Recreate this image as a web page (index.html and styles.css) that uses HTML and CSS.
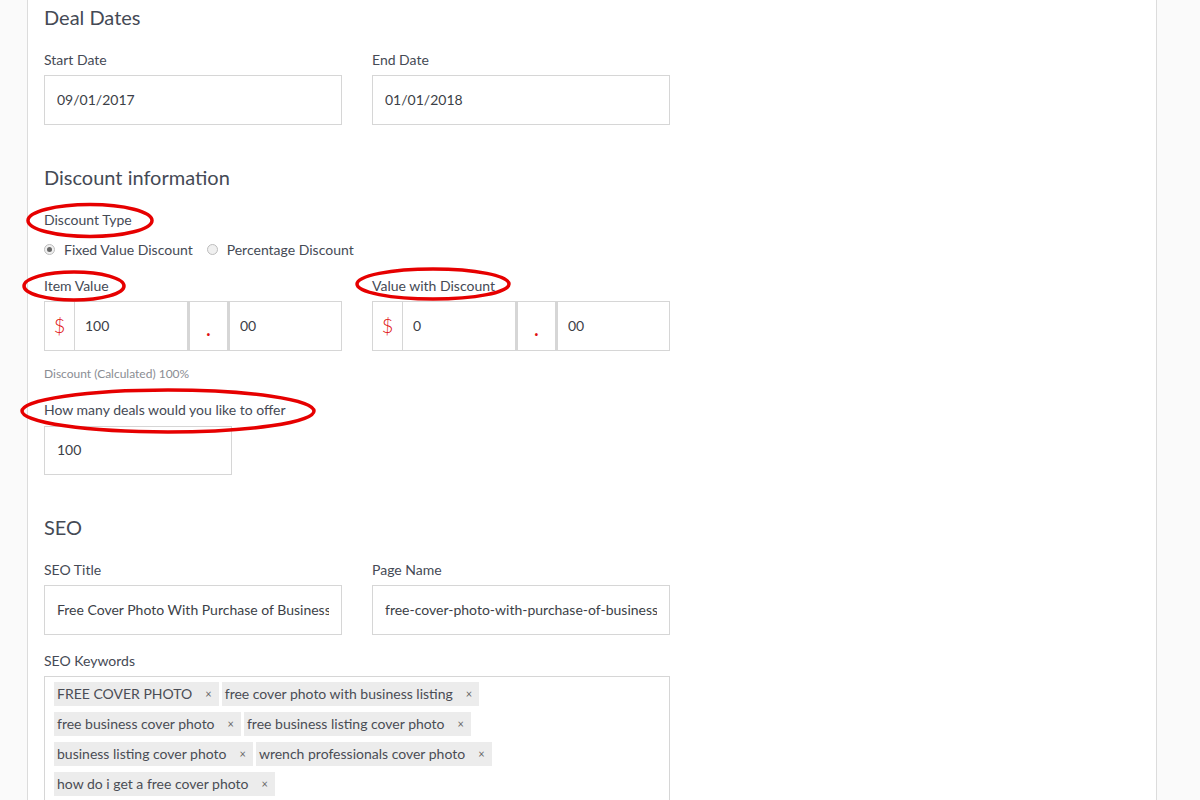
FILE: index.html
```html
<!DOCTYPE html>
<html>
<head>
<meta charset="utf-8">
<link rel="stylesheet" href="styles.css">
</head>
<body>
<div class="page">
  <div class="panel">
    <h2 class="heading first">Deal Dates</h2>
    <div class="row">
      <div class="field">
        <label class="label">Start Date</label>
        <input class="input" type="text" value="09/01/2017">
      </div>
      <div class="field">
        <label class="label">End Date</label>
        <input class="input" type="text" value="01/01/2018">
      </div>
    </div>

    <h2 class="heading">Discount information</h2>
    <div class="label type-label">Discount Type</div>
    <div class="radios">
      <span class="radio checked"></span><span class="radio-text">Fixed Value Discount</span>
      <span class="radio"></span><span class="radio-text">Percentage Discount</span>
    </div>
    <div class="row row-money">
      <div class="field">
        <label class="label">Item Value</label>
        <div class="money">
          <span class="cell cur">$</span>
          <input class="cell num" type="text" value="100">
          <span class="cell dot">.</span>
          <input class="cell dec" type="text" value="00">
        </div>
      </div>
      <div class="field">
        <label class="label">Value with Discount</label>
        <div class="money">
          <span class="cell cur">$</span>
          <input class="cell num" type="text" value="0">
          <span class="cell dot">.</span>
          <input class="cell dec" type="text" value="00">
        </div>
      </div>
    </div>
    <div class="calc">Discount (Calculated) 100%</div>
    <label class="label deals-label">How many deals would you like to offer</label>
    <input class="input small" type="text" value="100">

    <h2 class="heading">SEO</h2>
    <div class="row">
      <div class="field">
        <label class="label">SEO Title</label>
        <input class="input" type="text" value="Free Cover Photo With Purchase of Business Listing">
      </div>
      <div class="field">
        <label class="label">Page Name</label>
        <input class="input" type="text" value="free-cover-photo-with-purchase-of-business-listing">
      </div>
    </div>
    <label class="label kw-label">SEO Keywords</label>
    <div class="tags">
      <span class="tag">FREE COVER PHOTO<span class="x">×</span></span>
      <span class="tag">free cover photo with business listing<span class="x">×</span></span>
      <span class="tag">free business cover photo<span class="x">×</span></span>
      <span class="tag">free business listing cover photo<span class="x">×</span></span>
      <span class="tag">business listing cover photo<span class="x">×</span></span>
      <span class="tag">wrench professionals cover photo<span class="x">×</span></span>
      <span class="tag">how do i get a free cover photo<span class="x">×</span></span>
    </div>
  </div>

  <svg class="marks" width="1200" height="800" viewBox="0 0 1200 800">
    <ellipse cx="90" cy="220.5" rx="62" ry="16" />
    <ellipse cx="74" cy="286" rx="50" ry="14" />
    <ellipse cx="433" cy="284" rx="76" ry="15" />
    <ellipse cx="168" cy="411" rx="146" ry="21" />
  </svg>
</div>
</body>
</html>
```

FILE: styles.css
```css
* { box-sizing: border-box; }
html, body {
  margin: 0;
  padding: 0;
  background: #fafafa;
  font-family: Lato, "Liberation Sans", sans-serif;
  color: #454a55;
}
.page {
  position: relative;
  width: 1200px;
  height: 800px;
  overflow: hidden;
}
.panel {
  margin-left: 27px;
  width: 1130px;
  min-height: 900px;
  background: #fff;
  border-left: 1px solid #dcdcdc;
  border-right: 1px solid #dcdcdc;
  padding: 5px 16px 0 16px;
}
.heading {
  font-weight: normal;
  font-size: 20px;
  line-height: 24px;
  margin: 40px 0 21px 0;
  color: #454a55;
}
.heading.first { margin-top: 0; }
.row {
  display: flex;
  gap: 30px;
}
.field {
  display: flex;
  flex-direction: column;
  width: 298px;
}
.label {
  display: block;
  font-size: 14px;
  line-height: 20px;
  margin-bottom: 5px;
  color: #454a55;
}
.input {
  display: block;
  width: 298px;
  height: 50px;
  border: 1px solid #d6d6d6;
  padding: 0 12px 2px 12px;
  font-family: inherit;
  font-size: 14px;
  color: #3c3f47;
  background: #fff;
  outline: none;
}
.input.small { width: 188px; height: 49px; }
.type-label { margin-bottom: 10px; }
.radios {
  display: flex;
  align-items: center;
  height: 20px;
  font-size: 14px;
  margin-bottom: 16px;
  padding-bottom: 2px;
}
.radio {
  width: 11px;
  height: 11px;
  border-radius: 50%;
  border: 1px solid #bdbdbd;
  background: #f0f0f0;
  margin-right: 9px;
  position: relative;
}
.radio.checked::after {
  content: "";
  position: absolute;
  left: 2px;
  top: 2px;
  width: 5px;
  height: 5px;
  border-radius: 50%;
  background: #666;
}
.radio-text { margin-right: 14px; }
.money {
  display: flex;
  height: 50px;
  width: 298px;
}
.cell {
  height: 50px;
  border: 1px solid #d6d6d6;
  border-left: none;
  font-family: inherit;
  font-size: 14px;
  color: #3c3f47;
  background: #fff;
}
.cell.cur {
  border-left: 1px solid #d6d6d6;
  width: 31px;
  color: #e01010;
  font-size: 20px;
  font-weight: 300;
  display: flex;
  align-items: center;
  justify-content: center;
  padding-bottom: 2px;
}
.cell.num { width: 113px; padding: 0 10px 2px 10px; outline: none; }
.cell.dot {
  width: 40px;
  border-left: 2px solid #d6d6d6;
  color: #e01010;
  font-size: 18px;
  font-weight: bold;
  display: flex;
  justify-content: center;
  align-items: center;
  padding-top: 6px;
}
.cell.dec { width: 114px; border-left: 2px solid #d6d6d6; padding: 0 10px 2px 10px; outline: none; }
.calc {
  font-size: 12px;
  line-height: 16px;
  color: #8a8d93;
  margin: 15px 0 18px 0;
}
.deals-label { margin-bottom: 6px; }
.kw-label { margin-top: 16px; }
.tags {
  width: 626px;
  border: 1px solid #d6d6d6;
  padding: 5px 9px 10px 9px;
  display: flex;
  flex-wrap: wrap;
  gap: 6px 3px;
}
.tag {
  display: inline-flex;
  align-items: center;
  height: 24px;
  background: #ececec;
  padding: 0 7px 2px 3px;
  font-size: 14px;
  color: #4a4d55;
}
.tag .x {
  font-size: 11px;
  margin-left: 13px;
  color: #666;
}
.marks {
  position: absolute;
  left: 0;
  top: 0;
  pointer-events: none;
}
.marks ellipse {
  fill: none;
  stroke: #e60000;
  stroke-width: 3.5;
}
```
